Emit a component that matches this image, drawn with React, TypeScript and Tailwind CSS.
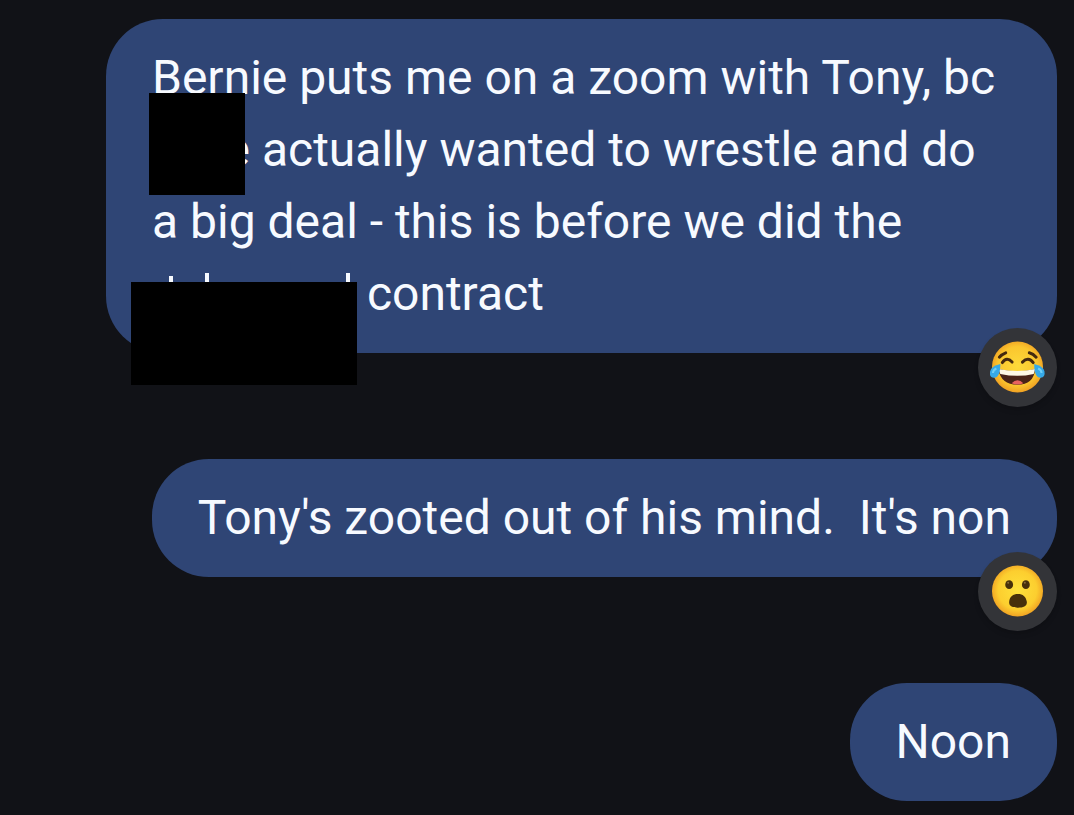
import React from 'react';

const JoyEmoji: React.FC = () => (
  <svg viewBox="0 0 114 110" className="h-[54px] w-14" role="img" aria-label="Face with tears of joy">
    <defs>
      <radialGradient id="joyFace" cx="50%" cy="48%" r="54%">
        <stop offset="0" stopColor="#fdd93a" />
        <stop offset="0.7" stopColor="#fbc62e" />
        <stop offset="1" stopColor="#ee9b22" />
      </radialGradient>
    </defs>
    <circle cx="56" cy="53" r="52" fill="url(#joyFace)" />
    <g fill="none" stroke="#45290f" strokeLinecap="round">
      <path d="M19 33 Q24 27 32 24" strokeWidth="6" />
      <path d="M80 24 Q88 26 94 33" strokeWidth="6" />
      <path d="M25 44 Q34 31 45 43" strokeWidth="6" />
      <path d="M66 43 Q78 31 88 44" strokeWidth="6" />
    </g>
    <path d="M17 57 Q57 66 92 57 Q89 89 56 89 Q22 89 17 57Z" fill="#492318" />
    <path d="M17 57 Q57 65 92 57 L89 67 Q56 75 21 67Z" fill="#fff8e5" />
    <path d="M44 86 Q56 74 68 86 Q56 91 44 86Z" fill="#e9635f" />
    <path d="M21 47 Q3 51 0 62 Q-2 74 8 75 Q21 75 21 47Z" fill="#36a9e7" />
    <path d="M90 47 Q108 51 111 62 Q113 74 103 75 Q90 75 90 47Z" fill="#36a9e7" />
    <path d="M13 56 Q6 59 6 65M98 56 Q105 59 105 65" fill="none" stroke="#70cff6" strokeWidth="4" />
  </svg>
);

const SurprisedEmoji: React.FC = () => (
  <svg viewBox="0 0 114 110" className="h-[54px] w-14" role="img" aria-label="Face with open mouth">
    <defs>
      <radialGradient id="surprisedFace" cx="50%" cy="48%" r="54%">
        <stop offset="0" stopColor="#fee13b" />
        <stop offset="0.7" stopColor="#fcce2f" />
        <stop offset="1" stopColor="#ef9d22" />
      </radialGradient>
    </defs>
    <circle cx="56" cy="53" r="52" fill="url(#surprisedFace)" />
    <ellipse cx="39" cy="40" rx="8" ry="9" fill="#47300b" />
    <ellipse cx="73" cy="40" rx="8" ry="9" fill="#47300b" />
    <ellipse cx="37" cy="36" rx="2" ry="2" fill="#896c38" />
    <ellipse cx="71" cy="36" rx="2" ry="2" fill="#896c38" />
    <path d="M39 75 C40 64 47 59 57 59 C67 59 73 64 75 75 C76 84 68 87 57 87 C46 87 38 84 39 75Z" fill="#47300b" />
  </svg>
);

const Reaction: React.FC<{ children: React.ReactNode }> = ({ children }) => (
  <span className="absolute right-0 -bottom-[54px] flex size-[79px] items-center justify-center rounded-full bg-[#333438] shadow-md">
    {children}
  </span>
);

const Bubble: React.FC<{ children: React.ReactNode; reaction?: React.ReactNode; wide?: boolean }> = ({
  children,
  reaction,
  wide,
}) => (
  <article
    className={`relative rounded-[57px] bg-[#2f4575] px-[46px] py-[23px] ${wide ? 'w-full' : 'w-fit max-w-full'}`}
  >
    <p className="whitespace-pre-wrap">{children}</p>
    {reaction && <Reaction>{reaction}</Reaction>}
  </article>
);

// Tops of the tall letters that show above the lower redaction
const Ascenders: React.FC = () => (
  <svg viewBox="0 0 203 72" className="h-full w-full" fill="#f7faff" aria-hidden="true">
    <path d="M17 18h4v14h-4zM53 15h4v14h-4zM194 15h4v14h-4z" />
  </svg>
);

export default function App() {
  return (
    <main className="flex min-h-screen flex-col items-end gap-[106px] bg-[#111217] pt-[19px] pr-[17px] pb-[14px] pl-[106px] font-['Roboto',sans-serif] text-[48px] leading-[72px] text-[#f7faff]">
      <Bubble wide reaction={<JoyEmoji />}>
        Bernie puts me on a zoom with Tony, bc
        <br />
        <span className="relative inline-block w-[98px] text-right">
          e<span className="absolute -top-[21px] -left-[3px] h-[102px] w-24 bg-black" />
        </span>{' '}
        actually wanted to wrestle and do
        <br />a big deal - this is before we did the
        <br />
        <span className="relative inline-block h-[72px] w-[203px] align-top">
          <Ascenders />
          <span className="absolute top-6 -left-[21px] h-[103px] w-[226px] bg-black" />
        </span>{' '}
        contract
      </Bubble>
      <Bubble reaction={<SurprisedEmoji />}>{"Tony's zooted out of his mind.  It's non"}</Bubble>
      <Bubble>Noon</Bubble>
    </main>
  );
}
